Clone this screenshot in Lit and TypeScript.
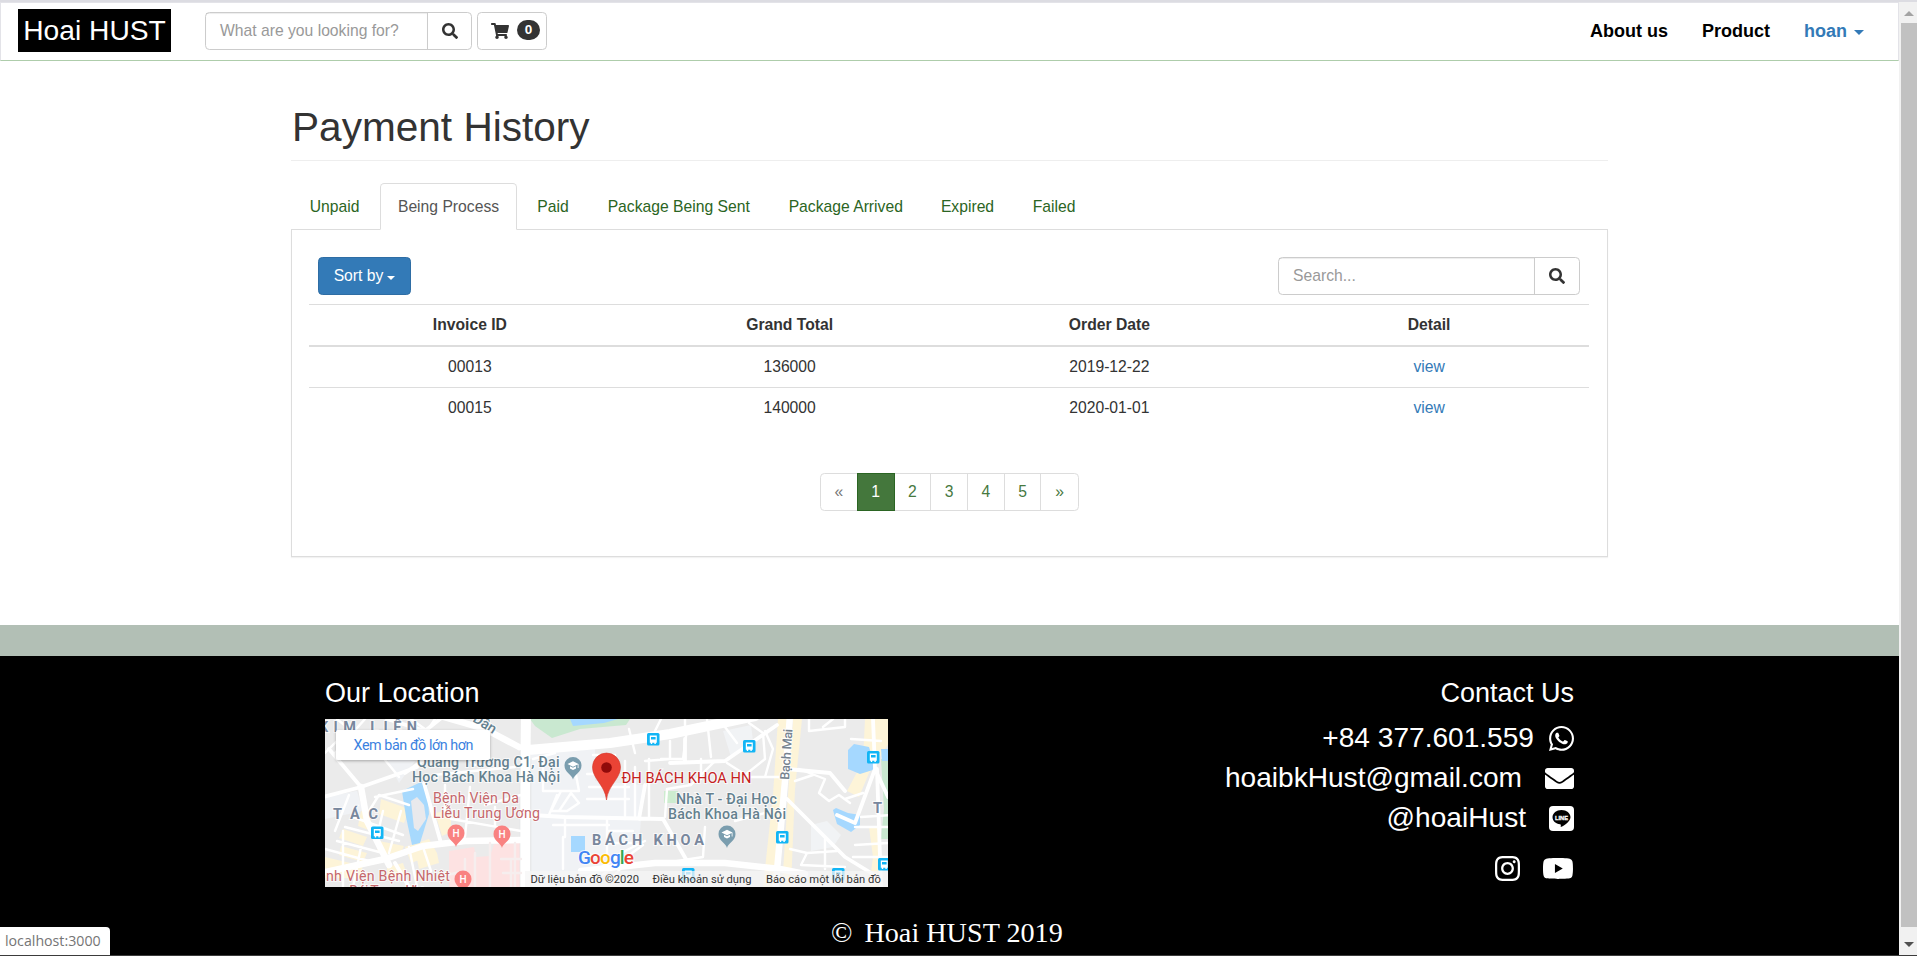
import { LitElement, html, svg, css } from "lit";
import { customElement, property } from "lit/decorators.js";

const SEARCH =
  "M505 442.7L405.3 343c-4.500-4.500-10.600-7-17-7H372c27.600-35.300 44-79.700 44-128C416 93.100 322.900 0 208 0S0 93.100 0 208s93.100 208 208 208c48.300 0 92.700-16.400 128-44v16.300c0 6.400 2.500 12.500 7 17l99.700 99.700c9.400 9.400 24.600 9.400 33.900 0l28.300-28.300c9.400-9.400 9.400-24.600.1-34zM208 336c-70.700 0-128-57.200-128-128 0-70.700 57.200-128 128-128 70.700 0 128 57.200 128 128 0 70.700-57.200 128-128 128z";
const CART =
  "M528.120 301.319l47.273-208C578.806 78.301 567.391 64 551.990 64H159.208l-9.166-44.810C147.758 8.021 137.930 0 126.529 0H24C10.745 0 0 10.745 0 24v16c0 13.255 10.745 24 24 24h69.883l70.248 343.435C147.325 417.100 136 435.222 136 456c0 30.928 25.072 56 56 56s56-25.072 56-56c0-15.674-6.447-29.835-16.824-40h209.647C430.447 426.165 424 440.326 424 456c0 30.928 25.072 56 56 56s56-25.072 56-56c0-22.172-12.888-41.332-31.579-50.405l5.517-24.276c3.413-15.018-8.002-29.319-23.403-29.319H218.117l-6.545-32h293.145c11.206 0 20.920-7.754 23.403-18.681z";
const WHATSAPP =
  "M380.900 97.100C339 55.100 283.200 32 223.900 32c-122.400 0-222 99.600-222 222 0 39.100 10.200 77.300 29.600 111L0 480l117.700-30.900c32.400 17.700 68.900 27 106.100 27h.1c122.300 0 224.100-99.600 224.100-222 0-59.300-25.200-115-67.100-157zm-157 341.600c-33.200 0-65.700-8.900-94-25.700l-6.700-4-69.800 18.300L72 359.200l-4.400-7c-18.500-29.400-28.200-63.300-28.200-98.200 0-101.700 82.800-184.500 184.600-184.500 49.300 0 95.600 19.200 130.400 54.100 34.800 34.900 56.200 81.200 56.100 130.500 0 101.800-84.900 184.600-186.600 184.600zm101.200-138.200c-5.500-2.800-32.800-16.200-37.900-18-5.100-1.900-8.800-2.800-12.500 2.800-3.700 5.600-14.300 18-17.600 21.800-3.200 3.700-6.500 4.200-12 1.400-32.600-16.300-54-29.100-75.500-66-5.700-9.800 5.700-9.100 16.300-30.300 1.800-3.700.9-6.900-.5-9.700-1.400-2.800-12.500-30.100-17.100-41.200-4.500-10.800-9.100-9.300-12.500-9.500-3.200-.2-6.900-.2-10.600-.2-3.700 0-9.700 1.400-14.800 6.900-5.100 5.600-19.400 19-19.400 46.300 0 27.300 19.900 53.700 22.600 57.400 2.800 3.700 39.100 59.700 94.800 83.800 35.200 15.200 49 16.500 66.600 13.900 10.700-1.600 32.800-13.400 37.400-26.400 4.600-13 4.600-24.100 3.200-26.400-1.300-2.500-5-3.900-10.500-6.600z";
const ENVELOPE =
  "M502.300 190.800c3.900-3.100 9.700-.2 9.700 4.700V400c0 26.500-21.500 48-48 48H48c-26.500 0-48-21.500-48-48V195.600c0-5 5.700-7.800 9.700-4.700 22.400 17.400 52.100 39.500 154.100 113.600 21.100 15.400 56.700 47.800 92.200 47.600 35.700.3 72-32.800 92.300-47.600 102-74.100 131.600-96.300 154-113.700zM256 320c23.200.4 56.600-29.200 73.400-41.400 132.700-96.300 142.800-104.700 173.400-128.700 5.800-4.500 9.200-11.500 9.200-18.900v-19c0-26.500-21.500-48-48-48H48c-26.500 0-48 21.500-48 48v19c0 7.400 3.400 14.300 9.200 18.900 30.600 23.900 40.700 32.400 173.400 128.700 16.800 12.200 50.200 41.800 73.400 41.400z";
const INSTAGRAM =
  "M224.100 141c-63.600 0-114.900 51.300-114.900 114.900s51.300 114.900 114.900 114.900S339 319.500 339 255.900 287.700 141 224.100 141zm0 189.600c-41.100 0-74.700-33.500-74.700-74.700s33.500-74.700 74.700-74.700 74.700 33.500 74.700 74.700-33.600 74.700-74.700 74.700zm146.400-194.300c0 14.900-12 26.800-26.800 26.800-14.900 0-26.800-12-26.800-26.800s12-26.800 26.800-26.800 26.800 12 26.800 26.800zm76.100 27.200c-1.700-35.900-9.900-67.700-36.200-93.900-26.200-26.200-58-34.400-93.900-36.200-37-2.100-147.900-2.100-184.900 0-35.800 1.700-67.600 9.900-93.900 36.100s-34.400 58-36.200 93.900c-2.100 37-2.100 147.900 0 184.900 1.700 35.900 9.900 67.700 36.200 93.900s58 34.400 93.900 36.200c37 2.100 147.900 2.100 184.900 0 35.900-1.700 67.700-9.900 93.900-36.200 26.200-26.200 34.400-58 36.200-93.900 2.100-37 2.100-147.800 0-184.800zM398.800 388c-7.800 19.600-22.900 34.700-42.600 42.600-29.500 11.700-99.500 9-132.100 9s-102.700 2.600-132.100-9c-19.600-7.800-34.700-22.900-42.600-42.600-11.700-29.500-9-99.500-9-132.100s-2.600-102.700 9-132.100c7.800-19.600 22.900-34.700 42.600-42.600 29.500-11.700 99.500-9 132.100-9s102.700-2.600 132.100 9c19.600 7.800 34.700 22.900 42.600 42.600 11.700 29.500 9 99.500 9 132.100s2.700 102.700-9 132.100z";
const YOUTUBE =
  "M549.655 124.083c-6.281-23.650-24.787-42.276-48.284-48.597C458.781 64 288 64 288 64S117.220 64 74.629 75.486c-23.497 6.322-42.003 24.947-48.284 48.597-11.412 42.867-11.412 132.305-11.412 132.305s0 89.438 11.412 132.305c6.281 23.650 24.787 41.500 48.284 47.821C117.220 448 288 448 288 448s170.780 0 213.371-11.486c23.497-6.321 42.003-24.171 48.284-47.821 11.412-42.867 11.412-132.305 11.412-132.305s0-89.438-11.412-132.305zm-317.510 213.508V175.185l142.739 81.205-142.739 81.201z";

const icon = (cls: string, box: string, d: string) =>
  html`<svg class=${cls} viewBox=${box} preserveAspectRatio="none"><path fill="currentColor" d=${d} /></svg>`;

@customElement("location-map")
class LocationMap extends LitElement {
  static styles = css`
    :host { display: block; }
    svg { display: block; width: 563px; height: 168px; }
    text { font-family: Roboto, sans-serif; }
    .halo { paint-order: stroke; stroke: #fff; stroke-width: 2px; stroke-opacity: 0.7; }
    .area { font-weight: 700; fill: #78879d; font-size: 14.500px; }
    .school { font-weight: 500; fill: #64808e; font-size: 14.200px; }
    .hosp { fill: #c5676b; font-size: 14.200px; font-weight: 400; }
    .attr { fill: #333; font-size: 11.200px; }
    .road { fill: none; stroke: #fff; stroke-linecap: round; stroke-linejoin: round; }
  `;

  bus(x: number, y: number) {
    return svg`<g transform="translate(${x} ${y})">
      <rect width="12.500" height="12.500" rx="1.500" fill="#12b5f5"/>
      <path d="M2.800 2.500h7v7.200h-1v1.200H7.400V9.700H5.200v1.200H3.800V9.700h-1z" fill="#fff"/>
      <rect x="4" y="4" width="4.600" height="2.500" fill="#12b5f5"/></g>`;
  }
  hPin(x: number, y: number) {
    return svg`<g transform="translate(${x} ${y})">
      <path d="M0 14C-1 9-8.500 7-8.500 0a8.500 8.500 0 0 1 17 0C8.500 7 1 9 0 14z" fill="#f98281"/>
      <text x="0" y="3.600" text-anchor="middle" font-size="10" font-weight="500" fill="#fff">H</text></g>`;
  }
  gradPin(x: number, y: number) {
    return svg`<g transform="translate(${x} ${y})">
      <path d="M0 14C-1 9-8.500 7-8.500 0a8.500 8.500 0 0 1 17 0C8.500 7 1 9 0 14z" fill="#7a9dae"/>
      <path d="M-5.500-1.500L0-4.200 5.500-1.500V2.500H4.700V-1L0 1.200z M-3 .8L0 2.300 3 .8V3L0 4.500-3 3z" fill="#fff"/></g>`;
  }

  render() {
    return html`<svg viewBox="0 0 563 168">
      <defs><filter id="s" x="-10%" y="-20%" width="120%" height="160%"><feDropShadow dx="0" dy="1" stdDeviation="1.500" flood-opacity=".3" /></filter></defs>
      <rect width="563" height="168" fill="#ebebeb" />
      <path d="M206 35L270 30V62L318 66 314 130 280 148 260 168H206z M0 78l32-6 6 20-38 8z M60 36l30 6-16 22z" fill="#f0f2f5" />
      <path d="M398 12l28-6 2 16-22 16z M486 106l16-4 14 14-8 12-22 4z" fill="#f1f3f5" />
      <path d="M205 0h100l-4 6-46 4-28 9-17-12z" fill="#c9e8d0" />
      <path d="M245 0h48l-14 4-31 3z" fill="#a5d8ff" />
      <path d="M339 72h14v12h-14z" fill="#cdeccf" />
      <path d="M556 40h7v80h-7l3-30z" fill="#c9e8d0" />
      <g fill="#fdf4d8">
        <path d="M453 0h9l-4 62-7 106h-13l10-92z M468 0h9l-7 70-4 98h-9z" />
        <path d="M540 0h24v24l-20 30-10 24-12-6 16-30z M544 108h12v60h-12l4-30z" />
        <path d="M56 80l28 10-5 14-25-9z M36 92l8 3 5 18-16-6z M18 110l24 8-4 9-24-8z M80 128l24-8 8 14-26 10z M54 122l25 5-5 10-22-4z M16 127l26 7-4 9-24-7z M62 148l16-4 4 12-20 4z M0 138l38 9-4 12H0z M110 94l16-3 0 22-9 4z M92 140l20-6 2 10-20 6z" />
      </g>
      <path d="M124 132l25-4 2 10 14-1 4-12 26-1v44h-71z" fill="#fde2e2" />
      <path d="M77 72L98 62l4 3 2 30-9 29-8 2-6-28z" fill="#a7d9fd" />
      <path d="M86 82l6-4 7 8 2 14-8 12-4-3z" fill="#e9e9ec" />
      <path d="M523 31l6-6 15 3 7 22-16 5-12-5z M508 91l3-2 12 5 12 2v10l-9 7-14-8z M556 30h7v12h-6z M246 117h14v16h-14z" fill="#a5d8ff" />
      <g class="road" stroke-width="10">
        <path d="M201-6L200 80 200 174M203 31L285 24 345 15 430-3" />
      </g>
      <path d="M195 30V168M206 40V168" fill="none" stroke="#e4e6e8" stroke-width=".7" />
      <g class="road" stroke-width="6.500">
        <path d="M-4 154L60 140 98 127 140 122 196 121M36 68L42 102 64 146M112-4L160 10 194 28M465-4L460 62 450 174M256 152L330 144 400 144 455 150 480 155" />
      </g>
      <g class="road" stroke-width="3.800">
        <path d="M-2 78L36 68 76 54 92 48M36 68L4 30M80 54L106 36M99 64L108 96 116 124M62 0L100 12 120-4M84 168L70 144M548 0L550 50 563 78M550 50L530 104 512 96M552 50L556 168" />
        <path d="M206 96L240 98 338 100 362 142M320 66L314 100M345 44L400 42 452 6M360 20V42M462 80L520 138 556 160M462 50L505 54 520 72" />
      </g>
      <g class="road" stroke-width="2.400">
        <path d="M12 0L56 36 74 58M40 0L10 34M86 0L150 46M110 0L94 24M0 34L24 10M24 76L10 112M28 98L78 116M20 108L74 122M12 122L58 134M50 78L88 70M108 56L190 48M120 66V92M145 68L140 118M160 86L196 76M126 100L196 112M170 108V88M44 92L54 76 84 86M58 92L52 118M76 92L64 134M0 130L44 142M18 112V168M36 128L28 168M84 128L92 168M98 128L106 152" />
        <path d="M218 38V72H254L248 40M208 40L230 34M232 76L224 96M236 72L226 92 242 92 254 84 246 74 234 92M228 106H284M240 100V118M300 42V100M262 55H290M264 68H304M262 80H304M310 48V100M282 100V136M284 112H308M284 124H306M238 118V150M252 166L296 134 320 122M262 160L300 132M272 160L318 126M288 158L306 138" />
        <path d="M268 36H290V56M304 10L310 34M345 22V40L320 42M324 40V98M336 0L330 12M362 10L358 40 336 40M360 12V0M382 0L386 38M400 8L412 24M390 42L366 66 342 70 340 98M376 40V60M420 56L440 40 438 14 424 4M402 44L424 58 456 58M440 12L448 30 440 58M484 0V12L520 8V0M498 8L508 0M474 50L500 60 494 74 504 82M470 62L488 56M504 82L514 76 525 84M520 80L538 74M465 130L482 134 512 132M482 134L476 146 520 148M500 120V150M380 108L378 138 340 144M526 20L556 22M528 138H563M530 126L563 124M530 108H563M566 96L536 98M410 102L440 94" />
        <path d="M140 168V140M150 168V134M165 168V124M176 140H196M178 154H196M186 168V140M122 156L140 152M190 124V168" stroke="#f6eeee" />
      </g>

      <text class="area halo" x="-6" y="12.500" textLength="98">KIM LIÊN</text>
      <text class="school halo" transform="translate(147 2) rotate(32)" font-size="12">Dân</text>
      <text class="school halo" x="92" y="47.500" textLength="142.500">Quảng Trường C1, Đại</text>
      <text class="school halo" x="87" y="62.500" textLength="148">Học Bách Khoa Hà Nội</text>
      <text class="hosp halo" x="108" y="83.500" textLength="86">Bệnh Viện Da</text>
      <text class="hosp halo" x="108" y="98.500" textLength="107">Liễu Trung Ương</text>
      <text class="area halo" x="8" y="99.500" textLength="45">TÁC</text>
      <text class="hosp halo" x="1" y="162" textLength="124">nh Viện Bệnh Nhiệt</text>
      <text class="hosp halo" x="24" y="177" textLength="88">Đới Trung Ương</text>
      <text class="school halo" x="351" y="85" textLength="101">Nhà T - Đại Học</text>
      <text class="school halo" x="343" y="99.500" textLength="118">Bách Khoa Hà Nội</text>
      <text class="area halo" x="267" y="125.500" textLength="112">BÁCH KHOA</text>
      <text class="area halo" x="548" y="94" textLength="27">TH</text>
      <text class="halo" transform="translate(464 61) rotate(-86)" font-size="12.800" font-weight="500" fill="#77838f" textLength="51">Bạch Mai</text>

      ${this.bus(46, 107.5)}${this.bus(322, 14)}${this.bus(418, 21)}${this.bus(542, 32)}${this.bus(451, 112)}${this.bus(553, 139)}${this.bus(357, 149)}${this.bus(507, 149)}
      ${this.hPin(131, 114)}${this.hPin(177, 115)}${this.hPin(138, 160)}
      ${this.gradPin(248, 46.5)}${this.gradPin(402, 115)}

      <path d="M281.500 81C280 66 267.500 60 267.500 48a14 14 0 0 1 28 0C295.500 60 283 66 281.500 81z" fill="#ea4335" stroke="#d33b2f" stroke-width=".6" />
      <circle cx="281.500" cy="48.500" r="5.300" fill="#910a0a" />
      <text class="halo" x="296.500" y="64" font-size="14.800" fill="#c5221f" textLength="130" lengthAdjust="spacingAndGlyphs">ĐH BÁCH KHOA HN</text>

      <rect x="200" y="152" width="363" height="16" fill="#f5f5f5" fill-opacity=".75" />
      <text class="attr" x="205.500" y="164" textLength="108.500">Dữ liệu bản đồ ©2020</text>
      <text class="attr" x="327.500" y="164" textLength="99">Điều khoản sử dụng</text>
      <text class="attr" x="441" y="164" textLength="115">Báo cáo một lỗi bản đồ</text>

      <text class="halo" x="253" y="145" font-size="19" font-weight="500" textLength="56"><tspan fill="#4285f4">G</tspan><tspan fill="#ea4335">o</tspan><tspan fill="#fbbc05">o</tspan><tspan fill="#4285f4">g</tspan><tspan fill="#34a853">l</tspan><tspan fill="#ea4335">e</tspan></text>

      <rect x="11" y="11" width="154" height="30" rx="2" fill="#fff" filter="url(#s)" />
      <text x="28.500" y="31" font-size="14.300" fill="#3b82e0" textLength="120">Xem bản đồ lớn hơn</text>
    </svg>`;
  }
}

@customElement("app-root")
class AppRoot extends LitElement {
  @property({ attribute: false }) tabs: [string, number][] = [
    ["Unpaid", 87], ["Being Process", 137], ["Paid", 68], ["Package Being Sent", 179.5],
    ["Package Arrived", 150.5], ["Expired", 89], ["Failed", 80],
  ];
  @property({ attribute: false }) rows = [
    ["00013", "136000", "2019-12-22"],
    ["00015", "140000", "2020-01-01"],
  ];

  static styles = css`
    :host { display: block; font-family: "Liberation Sans", Arial, sans-serif; font-size: 15.700px; line-height: 22px; color: #333; }
    * { box-sizing: border-box; }
    svg { display: block; flex: none; }
    .screen { position: relative; width: 1917px; height: 956px; overflow: hidden; display: flex; flex-direction: column; background: #fff; border-top: 2px solid #dcdce2; border-bottom: 1px solid #3b3b3b; }
    .view { flex: 1; display: flex; min-height: 0; }
    .page { width: 1899px; display: flex; flex-direction: column; }
    .bar { width: 18px; background: #f1f1f1; display: flex; flex-direction: column; align-items: center; padding-left: 2px; }
    .up { height: 21px; display: flex; align-items: center; padding-top: 1px; }
    .thumb { width: 16px; flex: 1; background: #c1c1c1; }
    .down { height: 28px; display: flex; align-items: center; padding-top: 7px; }

    nav { height: 59px; border: 1px solid #e3e3e8; border-bottom-color: #aecdab; display: flex; align-items: flex-start; padding-left: 17px; }
    .logo { margin-top: 6px; width: 153px; height: 43px; background: #000; color: #fff; font-size: 28.200px; line-height: 43px; text-align: center; white-space: nowrap; }
    .group { display: flex; height: 38px; border: 1px solid #ccc; border-radius: 4.400px; background: #fff; }
    .field { flex: 1; color: #999; padding-left: 14px; line-height: 36px; box-shadow: inset 0 1px 1px rgba(0,0,0,.075); white-space: nowrap; }
    .go { width: 45px; border-left: 1px solid #ccc; display: flex; align-items: center; justify-content: center; color: #333; }
    .find { width: 267px; margin: 9px 5px 0 34px; }
    .find .field { line-height: 35px; }
    .find .go { width: 44px; }
    .cart { width: 70px; margin-top: 9px; align-items: center; padding-left: 13px; gap: 8px; }
    .i16 { width: 16px; height: 16px; }
    .icart { width: 18px; height: 16px; margin-top: -1px; }
    .badge { width: 23px; height: 20px; border-radius: 11px; background: #333; color: #fff; font-weight: bold; font-size: 13.500px; line-height: 20px; text-align: center; margin-top: -3px; }
    .links { margin-left: auto; display: flex; padding-top: 17px; padding-right: 34px; font-weight: bold; font-size: 18px; color: #000; line-height: 22px; }
    .links span { margin-right: 34px; }
    .links .user { color: #337ab7; margin-right: 0; display: flex; align-items: center; gap: 7px; }
    .caret { border-top: 4.400px solid; border-left: 4.400px solid transparent; border-right: 4.400px solid transparent; display: inline-block; }
    .user .caret { margin-top: 3px; border-width: 5px 5px 0; }

    main { width: 1317px; margin-left: 291px; height: 564px; padding-top: 42px; }
    h1 { margin: 0; font-weight: normal; font-size: 40.600px; line-height: 49px; height: 58px; border-bottom: 1px solid #eee; padding-left: 1px; }
    .tabs { display: flex; gap: 2px; margin-top: 22px; height: 47px; border-bottom: 1px solid #ddd; }
    .tab { height: 46px; padding-top: 13px; text-align: center; color: #2b6523; white-space: nowrap; }
    .tab.on { height: 47px; border: 1px solid #ddd; border-bottom-color: #fff; border-radius: 4.400px 4.400px 0 0; background: #fff; color: #555; padding-top: 12px; }
    .panel { height: 327px; border: 1px solid #ddd; border-top: 0; box-shadow: 0 1px 1px rgba(0,0,0,.05); padding: 27px 18px 0 17px; }
    .tools { display: flex; justify-content: space-between; padding: 0 9px 0 9px; height: 47px; }
    .sort { width: 93px; height: 38px; background: #337ab7; border: 1px solid #2e6da4; border-radius: 4.400px; color: #fff; display: flex; align-items: center; justify-content: center; gap: 4px; white-space: nowrap; }
    .sort .caret { margin-top: 3px; }
    .search { width: 302px; }
    .search .field { padding-left: 14px; line-height: 35px; }
    .row { display: grid; grid-template-columns: repeat(4, 1fr); text-align: center; border-top: 1px solid #ddd; height: 41.500px; padding: 8.500px 0 0 1px; }
    .row.head { font-weight: bold; border-bottom: 2px solid #ddd; height: 43px; }
    .row.first { border-top: 0; height: 40px; }
    .view-link { color: #337ab7; }
    .pages { display: flex; width: 259px; height: 38px; margin: 44px auto 0 511px; border: 1px solid #ddd; border-radius: 4.400px; }
    .pg { width: 36.900px; text-align: center; line-height: 36px; color: #47793f; border-right: 1px solid #ddd; }
    .pg:last-child { border-right: 0; }
    .pg.prev { width: 36px; color: #777; border-right: 0; }
    .pg.on { width: 38px; height: 38px; margin-top: -1px; background: #44773c; border: 1px solid #2b6523; color: #fff; }

    .band { height: 31px; background: #b2bfb5; }
    footer { flex: 1; background: #000; color: #fff; display: flex; flex-direction: column; }
    .cols { display: flex; justify-content: space-between; padding: 22px 325px 0 325px; height: 253px; }
    h3 { margin: 0; font-weight: normal; font-size: 27px; line-height: 30px; height: 41px; }
    .contact { display: flex; flex-direction: column; align-items: flex-end; font-size: 28.100px; }
    .contact h3 { height: 40px; }
    .line { display: flex; align-items: center; height: 40px; line-height: 40px; }
    .phone { gap: 15px; }
    .mail { gap: 23px; }
    .at { gap: 23px; }
    .social { gap: 23px; margin-top: 10px; padding-right: 1px; }
    .i25 { width: 25px; height: 25px; }
    .ienv { width: 29px; height: 21px; }
    .iyt { width: 30px; height: 21px; }
    .copy { font-family: "Liberation Serif", "Times New Roman", serif; font-size: 28.200px; line-height: 32px; padding: 8px 0 0 831px; display: flex; gap: 12px; white-space: nowrap; }
    .status { position: absolute; left: 0; bottom: 0; width: 110px; height: 28px; background: #fff; border-radius: 0 4px 0 0; font-family: "Open Sans", "Noto Sans", sans-serif; font-size: 14.200px; line-height: 27px; padding-left: 5px; color: #757575; white-space: nowrap; }
  `;

  render() {
    return html`<div class="screen">
      <div class="view">
        <div class="page">
          <nav>
            <div class="logo">Hoai HUST</div>
            <div class="group find"><div class="field">What are you looking for?</div><div class="go">${icon("i16", "0 0 512 512", SEARCH)}</div></div>
            <div class="group cart">${icon("icart", "0 0 576 512", CART)}<span class="badge">0</span></div>
            <div class="links"><span>About us</span><span>Product</span><span class="user">hoan<i class="caret"></i></span></div>
          </nav>
          <main>
            <h1>Payment History</h1>
            <div class="tabs">
              ${this.tabs.map(([t, w], i) => html`<div class="tab ${i === 1 ? "on" : ""}" style="width:${w}px">${t}</div>`)}
            </div>
            <section class="panel">
              <div class="tools">
                <div class="sort">Sort by<i class="caret"></i></div>
                <div class="group search"><div class="field">Search...</div><div class="go">${icon("i16", "0 0 512 512", SEARCH)}</div></div>
              </div>
              <div class="row head"><span>Invoice ID</span><span>Grand Total</span><span>Order Date</span><span>Detail</span></div>
              ${this.rows.map((r, i) => html`<div class="row ${i === 0 ? "first" : ""}">${r.map((c) => html`<span>${c}</span>`)}<span class="view-link">view</span></div>`)}
              <div class="pages">
                <span class="pg prev">«</span><span class="pg on">1</span>
                ${["2", "3", "4", "5", "»"].map((p) => html`<span class="pg">${p}</span>`)}
              </div>
            </section>
          </main>
          <div class="band"></div>
          <footer>
            <div class="cols">
              <div><h3>Our Location</h3><location-map></location-map></div>
              <div class="contact">
                <h3>Contact Us</h3>
                <div class="line phone">+84 377.601.559${icon("i25", "0 32 448 448", WHATSAPP)}</div>
                <div class="line mail">hoaibkHust@gmail.com${icon("ienv", "0 64 512 384", ENVELOPE)}</div>
                <div class="line at">@hoaiHust<svg class="i25" viewBox="0 0 25 25">
                    <rect width="25" height="25" rx="4" fill="#fff" />
                    <path d="M12.500 4C7.500 4 3.500 7.200 3.500 11.200c0 3.600 3.200 6.500 7.600 7.100.9.200.8.600.6 2.700.1.500 9.800-4.700 9.800-9.800 0-4-4-7.200-9-7.200z" fill="#000" />
                    <text x="6" y="13.700" font-size="6.200" font-weight="bold" fill="#fff" stroke="#fff" stroke-width=".3" textLength="13" lengthAdjust="spacingAndGlyphs">LINE</text>
                  </svg></div>
                <div class="line social">${icon("i25", "0 31.500 448 448.500", INSTAGRAM)}${icon("iyt", "14.900 64 546.200 384", YOUTUBE)}</div>
              </div>
            </div>
            <div class="copy"><span>©</span><span>Hoai HUST 2019</span></div>
          </footer>
        </div>
        <div class="bar">
          <div class="up"><svg width="10" height="5"><path d="M5 0l5 5H0z" fill="#a3a3a3" /></svg></div>
          <div class="thumb"></div>
          <div class="down"><svg width="10" height="5"><path d="M0 0h10L5 5z" fill="#505050" /></svg></div>
        </div>
      </div>
      <div class="status">localhost:3000</div>
    </div>`;
  }
}
